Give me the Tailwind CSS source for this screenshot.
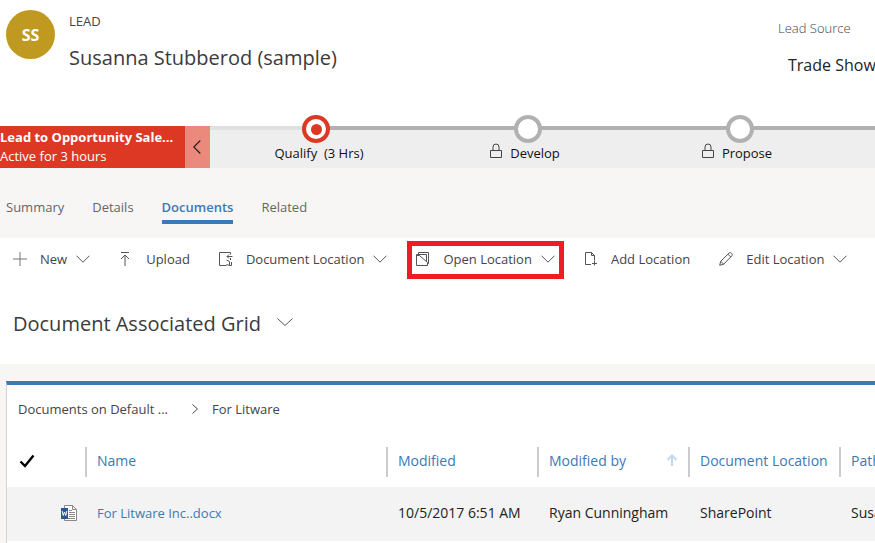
<!DOCTYPE html>
<html lang="en">
<head>
<meta charset="utf-8">
<meta name="viewport" content="width=device-width, initial-scale=1">
<title>Lead: Susanna Stubberod (sample)</title>
<script src="https://cdn.jsdelivr.net/npm/@tailwindcss/browser@4"></script>
</head>
<body class="min-h-screen overflow-x-hidden bg-[#f7f6f5] font-['Open_Sans','Noto_Sans',sans-serif] text-[13px] leading-5 text-[#444]">

<svg class="hidden" aria-hidden="true">
  <symbol id="chevron" viewBox="0 0 14 8"><path d="M.5.7 7 7.2 13.500.7" fill="none" stroke="currentColor"/></symbol>
  <symbol id="lock" viewBox="0 0 12 16"><path d="M.5 7.500h11v7H.5zM3 7.500V4a3 3 0 0 1 6 0v3.500" fill="none" stroke="currentColor"/></symbol>
</svg>

<header class="flex h-[126px] items-start justify-between bg-white pl-1.5">
  <div class="flex gap-3.5 pt-2.5">
    <div class="flex size-[49px] items-center justify-center rounded-full bg-[#c09a20] text-base font-bold text-white">SS</div>
    <div class="pt-px">
      <p>LEAD</p>
      <h1 class="mt-[11px] text-xl leading-8 text-[#3b3b3b]">Susanna Stubberod (sample)</h1>
    </div>
  </div>
  <dl class="w-[97px] shrink-0 whitespace-nowrap pt-[18px]">
    <dt class="font-light text-[#444]">Lead Source</dt>
    <dd class="mt-[15px] pl-2.5 text-base leading-6 text-[#222]">Trade Show</dd>
  </dl>
</header>

<section class="flex h-[42px] bg-[#eee] text-[#111]" aria-label="Business process">
  <div class="w-[185px] shrink-0 overflow-hidden bg-[#dd3824] pt-0.5 leading-[19px] whitespace-nowrap text-white">
    <p class="font-bold">Lead to Opportunity Sale...</p>
    <p>Active for 3 hours</p>
  </div>
  <button class="flex w-[25px] shrink-0 items-center justify-center bg-[#e98a7d] pr-0.5" aria-label="Collapse process">
    <svg class="h-3.5 w-2" viewBox="0 0 8 14"><path d="M7.300.5.8 7l6.500 6.500" fill="none" stroke="#222" stroke-width="1.200"/></svg>
  </button>
  <ol class="flex min-w-0 flex-1 overflow-x-clip whitespace-nowrap">
    <li class="relative flex w-[212px] shrink-0 justify-center bg-linear-to-r from-[#e0e0e0] from-50% to-[#b1b1b1] to-50% bg-[length:100%_4px] bg-no-repeat pt-[17px]">
      <span class="absolute -top-[11px] flex size-7 items-center justify-center rounded-full border-4 border-[#dd3824] bg-white"><span class="size-[11px] rounded-full bg-[#dd3824]"></span></span>
      <button class="ml-1.5 h-5 font-medium">Qualify&nbsp; (3 Hrs)</button>
    </li>
    <li class="relative flex w-[212px] shrink-0 justify-center border-t-4 border-[#b1b1b1] pt-[13px]">
      <span class="absolute -top-[15px] size-7 rounded-full border-4 border-[#b1b1b1] bg-white"></span>
      <button class="flex h-5 gap-2 pr-1.5"><svg class="h-4 w-3 text-[#444]"><use href="#lock"/></svg>Develop</button>
    </li>
    <li class="relative flex w-[212px] shrink-0 justify-center border-t-4 border-[#b1b1b1] pt-[13px]">
      <span class="absolute -top-[15px] size-7 rounded-full border-4 border-[#b1b1b1] bg-white"></span>
      <button class="flex h-5 gap-2 pr-1.5"><svg class="h-4 w-3 text-[#444]"><use href="#lock"/></svg>Propose</button>
    </li>
    <li class="flex-1 border-t-4 border-[#b1b1b1]"></li>
  </ol>
</section>

<nav class="flex h-[70px] items-start gap-7 pt-[29px] pl-1.5 text-[#666]" aria-label="Record tabs">
  <a href="#">Summary</a>
  <a href="#">Details</a>
  <a href="#" class="border-b-4 border-[#3b79b7] pb-[3px] font-semibold text-[#3b79b7]" aria-current="page">Documents</a>
  <a href="#">Related</a>
</nav>

<main>
  <div class="bg-white pb-6">
    <div class="flex h-[43px] items-center gap-[29px] pl-[13px] whitespace-nowrap" role="toolbar" aria-label="Document commands">
      <button class="flex shrink-0 items-center gap-[13px] pb-0.5">
        <svg class="size-3.5" viewBox="0 0 14 14"><path d="M7 0v14M0 7h14" stroke="#777"/></svg>
        <span class="flex items-center gap-[9px]">New<svg class="h-2 w-3.5 text-[#555]"><use href="#chevron"/></svg></span>
      </button>
      <button class="flex shrink-0 items-center gap-[13px] pb-0.5">
        <svg class="size-3.5" viewBox="0 0 14 14"><path d="M2 .5h8M6 14V3M2 7l4-4 4 4" fill="none" stroke="#555"/></svg>
        Upload
      </button>
      <button class="flex shrink-0 items-center gap-[13px] pb-0.5">
        <svg class="size-3.5" viewBox="0 0 14 14" fill="none" stroke="#555"><path d="M11.500 2.500V.5H.5v13h7M11.500 6v2M13.500 4.500H8M10 2.500l-2 2 2 2M7.500 8l3 1.500v4l-3-1M10.500 13.500h2V10"/></svg>
        <span class="flex items-center gap-[9px]">Document Location<svg class="h-2 w-3.5 text-[#555]"><use href="#chevron"/></svg></span>
      </button>
      <button class="-mx-[9px] flex h-[38px] shrink-0 items-center gap-[13px] border-[5px] border-[#ee1c25] px-1 pb-0.5">
        <svg class="size-3.5" viewBox="0 0 14 14" fill="none" stroke="#555"><path d="M2.500 2.500h-2v11h11v-2M2.500 4V.5h10v11h-1M.5 3.500h3l8 7v3M2.500 2.500h8v7"/></svg>
        <span class="flex items-center gap-[9px]">Open Location<svg class="h-2 w-3.5 text-[#555]"><use href="#chevron"/></svg></span>
      </button>
      <button class="flex shrink-0 items-center gap-[13px] pb-0.5">
        <svg class="size-3.5" viewBox="0 0 14 14" fill="none" stroke="#555"><path d="M7 12.500H1.500V.5h6l3 3V8M7.500.5v3h3M10.500 8.500v5M8 11.500h5"/></svg>
        Add Location
      </button>
      <button class="flex shrink-0 items-center gap-[13px] pb-0.5">
        <svg class="size-3.5" viewBox="0 0 14 14" fill="none" stroke="#555"><path d="m.7 13.300 1-4L10.200.9q1.200-.8 2.300.4t.5 2.400L4.700 12.200zM1.700 9.300l3 3M9 2.200l2.800 2.800"/></svg>
        <span class="flex items-center gap-[9px]">Edit Location<svg class="h-2 w-3.5 text-[#555]"><use href="#chevron"/></svg></span>
      </button>
    </div>
    <h2 class="mt-[27px] pl-[13px] text-xl leading-8 text-[#3b3b3b]">
      <button class="flex items-center gap-4">Document Associated Grid<svg class="-mt-1 h-2 w-4 text-[#555]" viewBox="0 0 16 8"><path d="m.5.500 7.500 7 7.500-7" fill="none" stroke="currentColor"/></svg></button>
    </h2>
  </div>

  <section class="mt-[17px] ml-1.5 overflow-hidden border-t-4 border-l border-t-[#3b79b7] border-l-[#d0d3d6] bg-white">
    <nav class="flex h-[50px] items-center pb-0.5 pl-[11px]" aria-label="Breadcrumb">
      <a href="#">Documents on Default ...</a>
      <svg class="mr-[13px] ml-[23px] h-2.5 w-2" viewBox="0 0 8 10"><path d="m1.500.5 5 4.500-5 4.500" fill="none" stroke="#444"/></svg>
      <a href="#">For Litware</a>
    </nav>
    <table class="w-full min-w-[983px] table-fixed text-left text-sm whitespace-nowrap">
      <colgroup><col class="w-[78px]"><col class="w-[301px]"><col class="w-[151px]"><col class="w-[151px]"><col class="w-[151px]"><col></colgroup>
      <thead class="text-[#3b79b7]">
        <tr class="h-[52px]">
          <th class="pl-3"><svg class="h-3.5 w-4" viewBox="0 0 16 14" role="img" aria-label="Select all"><path d="m1.500 7.500 4.500 4.500L14.500 1.500" fill="none" stroke="#000" stroke-width="2.400"/></svg></th>
          <th class="pt-0.5 font-normal"><div class="h-[30px] border-l-2 border-[#ccc] pl-2.5 leading-7">Name</div></th>
          <th class="pt-0.5 font-normal"><div class="h-[30px] border-l-2 border-[#ccc] pl-2.5 leading-7">Modified</div></th>
          <th class="pt-0.5 font-normal"><div class="flex h-[30px] justify-between border-l-2 border-[#ccc] px-2.5 leading-7">Modified by<svg class="mt-[7px] size-3" viewBox="0 0 12 12" role="img" aria-label="Sorted ascending"><path d="M6 12V2M1.500 6 6 1.500 10.500 6" fill="none" stroke="#c5daf0" stroke-width="2"/></svg></div></th>
          <th class="pt-0.5 font-normal"><div class="h-[30px] border-l-2 border-[#ccc] pl-2.5 leading-7">Document Location</div></th>
          <th class="pt-0.5 font-normal"><div class="h-[30px] border-l-2 border-[#ccc] pl-2.5 leading-7">Path</div></th>
        </tr>
      </thead>
      <tbody class="text-[#222]">
        <tr class="h-[54px] bg-[#f3f3f3]">
          <td class="pb-0.5 pl-[54px]">
            <svg class="size-4" viewBox="0 0 16 16" role="img" aria-label="Word document"><path d="M3.500.5h8l4 4v11h-12z" fill="#fff" stroke="#888"/><path d="M11.500.5v4h4M8 5.500h3M8 7.500h6M8 9.500h6M8 11.500h6M5 13.500h9" fill="none" stroke="#888"/><path d="M0 3h7v11H0z" fill="#2b579a"/><path d="m1.200 6 1 4.500L3.500 7l1.300 3.500 1-4.500" fill="none" stroke="#fff"/></svg>
          </td>
          <td class="pb-0.5 pl-3 text-[13px]"><a href="#" class="text-[#3b79b7]">For Litware Inc..docx</a></td>
          <td class="pb-0.5 pl-3">10/5/2017 6:51 AM</td>
          <td class="pb-0.5 pl-3">Ryan Cunningham</td>
          <td class="pb-0.5 pl-3">SharePoint</td>
          <td class="pb-0.5 pl-3">Susanna Stubberod</td>
        </tr>
      </tbody>
    </table>
    <div class="h-0.5"></div>
  </section>
</main>
</body>
</html>
